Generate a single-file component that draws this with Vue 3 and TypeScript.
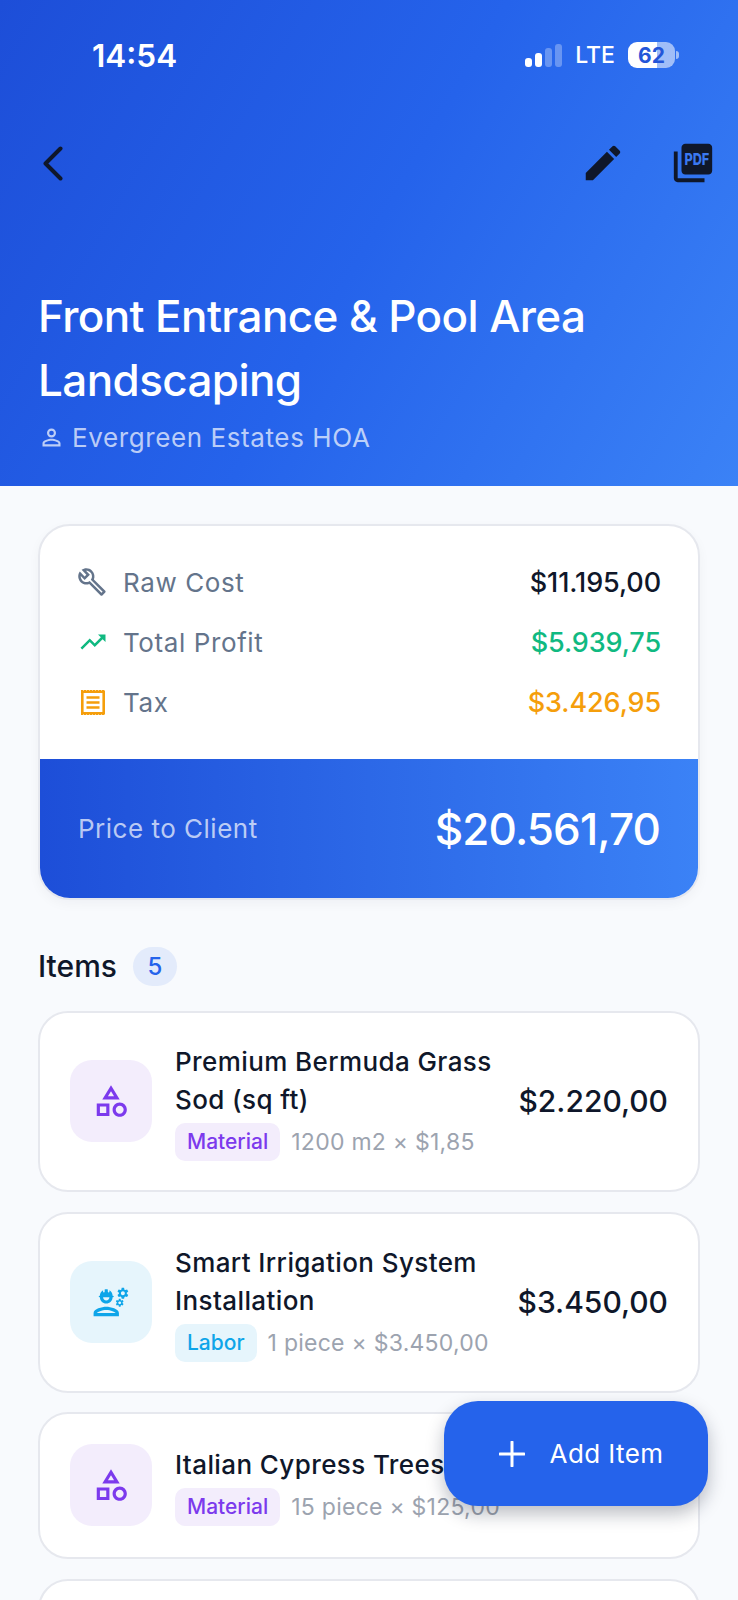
<script setup lang="ts">
// Quote detail screen: header, cost summary, item list and the add button.
interface Cost {
  label: string
  value: string
  tone: string
  icon: string
}

interface Item {
  name: string
  kind: 'Material' | 'Labor'
  meta: string
  total: string
}

const costs: Cost[] = [
  { label: 'Raw Cost', value: '$11.195,00', tone: 'raw', icon: 'build' },
  { label: 'Total Profit', value: '$5.939,75', tone: 'profit', icon: 'trend' },
  { label: 'Tax', value: '$3.426,95', tone: 'tax', icon: 'receipt' },
]

const items: Item[] = [
  { name: 'Premium Bermuda Grass Sod (sq ft)', kind: 'Material', meta: '1200 m2 × $1,85', total: '$2.220,00' },
  { name: 'Smart Irrigation System Installation', kind: 'Labor', meta: '1 piece × $3.450,00', total: '$3.450,00' },
  { name: 'Italian Cypress Trees', kind: 'Material', meta: '15 piece × $125,00', total: '$1.875,00' },
]
</script>

<template>
  <div class="screen">
    <header class="hero">
      <div class="status">
        <span class="clock">14:54</span>
        <div class="status-right">
          <span class="signal">
            <i class="bar b1"></i><i class="bar b2"></i><i class="bar b3 dim"></i><i class="bar b4 dim"></i>
          </span>
          <span class="lte">LTE</span>
          <span class="battery"><span class="battery-num">62</span></span>
          <span class="battery-tip"></span>
        </div>
      </div>

      <nav class="toolbar">
        <svg class="back" viewBox="0 0 21 35" fill="none" aria-hidden="true">
          <path d="M18.500 2.500 3.500 17.500 18.500 32.500" stroke="#0f172a" stroke-width="4" stroke-linecap="round" stroke-linejoin="round" />
        </svg>
        <div class="toolbar-right">
          <svg class="edit" viewBox="0 0 24 24" fill="#0f172a" aria-hidden="true">
            <path d="M3 17.250V21h3.750L17.810 9.940l-3.750-3.750L3 17.250zM20.710 7.040c.39-.39.39-1.020 0-1.410l-2.340-2.340c-.39-.39-1.020-.39-1.410 0l-1.830 1.830 3.750 3.750 1.830-1.830z" />
          </svg>
          <svg class="pdf" viewBox="0 0 24 24" aria-hidden="true">
            <path fill="#0f172a" d="M20 2H8c-1.100 0-2 .9-2 2v12c0 1.100.9 2 2 2h12c1.100 0 2-.9 2-2V4c0-1.100-.9-2-2-2zM4 6H2v14c0 1.100.9 2 2 2h14v-2H4V6z" />
            <text x="14" y="13" text-anchor="middle" class="pdf-text" textLength="13" lengthAdjust="spacingAndGlyphs">PDF</text>
          </svg>
        </div>
      </nav>

      <h1 class="title">Front Entrance &amp; Pool Area Landscaping</h1>
      <div class="client">
        <svg class="client-icon" viewBox="0 0 24 24" fill="currentColor" aria-hidden="true">
          <path d="M12 5.900a2.100 2.100 0 1 1 0 4.200 2.100 2.100 0 0 1 0-4.200m0 9c2.970 0 6.100 1.460 6.100 2.100v1.100H5.900V17c0-.64 3.130-2.100 6.100-2.100M12 4C9.790 4 8 5.790 8 8s1.790 4 4 4 4-1.790 4-4-1.790-4-4-4zm0 9c-2.670 0-8 1.340-8 4v3h16v-3c0-2.660-5.330-4-8-4z" />
        </svg>
        <span>Evergreen Estates HOA</span>
      </div>
    </header>

    <main class="body">
      <section class="summary">
        <div class="cost-list">
          <div v-for="c in costs" :key="c.label" class="cost">
            <span class="cost-icon" :class="c.tone">
              <svg v-if="c.icon === 'build'" class="ic-build" viewBox="0 0 24 24" fill="currentColor" aria-hidden="true">
                <path d="M22.610 18.990l-9.080-9.080c.93-2.340.45-5.100-1.440-7C9.790.61 6.210.4 3.660 2.260L7.500 6.110 6.080 7.520 2.250 3.690C.39 6.230.6 9.820 2.900 12.110c1.860 1.860 4.570 2.350 6.890 1.480l9.110 9.110c.39.39 1.020.39 1.410 0l2.300-2.300c.4-.38.4-1.010 0-1.410zm-3 1.600l-9.460-9.460c-.61.45-1.290.72-2 .82-1.360.2-2.790-.21-3.830-1.250C3.370 9.760 2.930 8.500 3 7.260l3.090 3.090 4.240-4.240-3.090-3.090c1.240-.07 2.490.37 3.440 1.310 1.080 1.080 1.490 2.570 1.240 3.960-.12.71-.42 1.370-.88 1.960l9.450 9.450-.88.88z" />
              </svg>
              <svg v-else-if="c.icon === 'trend'" class="ic-trend" viewBox="0 0 24 24" fill="currentColor" aria-hidden="true">
                <path d="M16 6l2.290 2.290-4.880 4.880-4-4L2 16.590 3.410 18l6-6 4 4 6.300-6.290L22 12V6z" />
              </svg>
              <svg v-else class="ic-receipt" viewBox="0 0 24 25" fill="none" stroke="currentColor" aria-hidden="true">
                <path stroke-width="2.600" d="M1.300 1.800h21.400v21.400H1.300z" />
                <path stroke-width="1.400" stroke-dasharray="2 1" d="M0 .7h24M0 24.300h24" />
                <path stroke-width="2.600" d="M5.500 7.500h13M5.500 12.500h13M5.500 17.500h13" />
              </svg>
            </span>
            <span class="cost-label">{{ c.label }}</span>
            <span class="cost-value" :class="c.tone">{{ c.value }}</span>
          </div>
        </div>
        <div class="price">
          <span class="price-label">Price to Client</span>
          <span class="price-value">$20.561,70</span>
        </div>
      </section>

      <div class="items-head">
        <h2 class="items-title">Items</h2>
        <span class="items-count">5</span>
      </div>

      <ul class="items">
        <li v-for="it in items" :key="it.name" class="item">
          <span class="item-icon" :class="it.kind.toLowerCase()">
            <svg v-if="it.kind === 'Material'" viewBox="0 0 24 24" fill="currentColor" aria-hidden="true">
              <path d="M12 2l-5.500 9h11L12 2zm0 3.840L13.930 9h-3.870L12 5.840zM17.500 13c-2.490 0-4.500 2.010-4.500 4.500s2.010 4.500 4.500 4.500 4.500-2.010 4.500-4.500-2.010-4.500-4.500-4.500zm0 7c-1.380 0-2.500-1.120-2.500-2.500s1.120-2.500 2.500-2.500 2.500 1.120 2.500 2.500-1.120 2.500-2.500 2.500zM3 21.500h8v-8H3v8zm2-6h4v4H5v-4z" />
            </svg>
            <svg v-else viewBox="0 0 24 24" fill="currentColor" aria-hidden="true">
              <path d="M9 15c-2.670 0-8 1.340-8 4v2h16v-2c0-2.660-5.330-4-8-4zm-6 4c.22-.72 3.310-2 6-2 2.700 0 5.800 1.290 6 2H3zM4.740 9H5c0 2.210 1.790 4 4 4s4-1.790 4-4h.26c.27 0 .49-.22.49-.49v-.02c0-.27-.22-.49-.49-.49H13c0-1.480-.81-2.750-2-3.450v.95c0 .28-.22.5-.5.5s-.5-.22-.5-.5V4.140C9.680 4.060 9.350 4 9 4s-.68.06-1 .14V5.500c0 .28-.22.5-.5.5S7 5.780 7 5.500v-.95C5.810 5.250 5 6.520 5 8h-.26c-.27 0-.49.22-.49.49v.03c0 .26.22.48.49.48zM11 9c0 1.100-.9 2-2 2s-2-.9-2-2h4z" />
              <path d="M21.980 6.230l.93-.83-.75-1.300-1.190.39c-.14-.11-.3-.2-.47-.27L20.250 3h-1.500l-.25 1.220c-.17.07-.33.16-.48.27l-1.180-.39-.75 1.300.93.83c-.02.17-.02.35 0 .52l-.93.85.75 1.300 1.200-.38c.13.1.28.18.43.25l.28 1.230h1.500l.27-1.220c.16-.07.3-.15.44-.25l1.190.38.75-1.300-.93-.85c.03-.19.02-.36.01-.53zM19.500 7.750c-.69 0-1.250-.56-1.250-1.250s.56-1.250 1.250-1.250 1.250.56 1.250 1.250-.56 1.250-1.250 1.250zM19.400 10.790l-.85.28c-.1-.08-.21-.14-.33-.19L18.040 10h-1.070l-.18.87c-.12.05-.24.12-.34.19l-.84-.28-.54.93.66.59c-.01.13-.01.25 0 .37l-.66.61.54.93.86-.27c.1.07.2.13.31.18l.18.88h1.070l.19-.87c.11-.05.22-.11.32-.18l.85.27.54-.93-.66-.61c.01-.13.01-.25 0-.37l.66-.59-.53-.93zm-1.900 2.600c-.49 0-.89-.4-.89-.89s.4-.89.89-.89.89.4.89.89-.4.89-.89.89z" />
            </svg>
          </span>
          <div class="item-main">
            <div class="item-name">{{ it.name }}</div>
            <div class="item-sub">
              <span class="pill" :class="it.kind.toLowerCase()">{{ it.kind }}</span>
              <span class="item-meta">{{ it.meta }}</span>
            </div>
          </div>
          <span class="item-total">{{ it.total }}</span>
        </li>
        <!-- next card only shows its top edge above the fold -->
        <li class="item item-peek"></li>
      </ul>
    </main>

    <button type="button" class="fab">
      <svg viewBox="0 0 26 26" fill="none" stroke="#fff" stroke-width="3" stroke-linecap="round" aria-hidden="true">
        <path d="M13 1v24M1 13h24" />
      </svg>
      <span>Add Item</span>
    </button>
  </div>
</template>

<style>
html,
body {
  margin: 0;
  background: #f8fafd;
}
</style>

<style scoped>
.screen {
  position: relative;
  width: 738px;
  height: 1600px;
  overflow: hidden;
  background: #f8fafd;
  font-family: Inter, 'Liberation Sans', sans-serif;
  color: #0f172a;
}

/* Header */
.hero {
  height: 486px;
  box-sizing: border-box;
  padding: 0 38px;
  background: linear-gradient(120deg, #1d4ed8 0%, #2563eb 50%, #3b82f6 100%);
  color: #fff;
}
.status {
  display: flex;
  align-items: center;
  justify-content: space-between;
  height: 110px;
  padding: 0 21px 0 54px;
}
.clock {
  font-size: 31.5px;
  font-weight: 600;
}
.status-right {
  display: flex;
  align-items: center;
}
.signal {
  display: flex;
  align-items: flex-end;
  gap: 3px;
  height: 23px;
  margin-right: 13px;
}
.bar {
  width: 7px;
  border-radius: 3px;
  background: #fff;
}
.bar.dim {
  background: rgba(255, 255, 255, 0.3);
}
.b1 { height: 9px; }
.b2 { height: 14px; }
.b3 { height: 19px; }
.b4 { height: 23px; }
.lte {
  font-size: 23px;
  font-weight: 500;
  margin-right: 13px;
}
.battery {
  display: flex;
  align-items: center;
  justify-content: center;
  width: 47px;
  height: 26px;
  border-radius: 9px;
  background: linear-gradient(90deg, #fff 62%, rgba(255, 255, 255, 0.55) 62%);
}
.battery-num {
  font-size: 21px;
  font-weight: 700;
  color: #2456d8;
}
.battery-tip {
  width: 3px;
  height: 8px;
  margin-left: 1px;
  border-radius: 0 3px 3px 0;
  background: rgba(255, 255, 255, 0.55);
}

.toolbar {
  display: flex;
  align-items: center;
  justify-content: space-between;
  height: 84px;
  padding-top: 11px;
  padding-left: 4px;
}
.back {
  width: 21px;
  height: 35px;
}
.toolbar-right {
  display: flex;
  align-items: center;
  gap: 44px;
  margin-right: -16px;
}
.edit {
  width: 46px;
  height: 46px;
}
.pdf {
  width: 46px;
  height: 46px;
  overflow: visible;
}
.pdf-text {
  font-family: Inter, 'Liberation Sans', sans-serif;
  font-size: 8.5px;
  font-weight: 800;
  fill: #3a78f0;
}

.title {
  margin: 79px 0 0;
  font-size: 44px;
  line-height: 64px;
  font-weight: 500;
  letter-spacing: -0.6px;
}
.client {
  display: flex;
  align-items: center;
  gap: 7px;
  margin-top: 10px;
  font-size: 26px;
  letter-spacing: 0.6px;
  color: rgba(255, 255, 255, 0.7);
}
.client-icon {
  width: 27px;
  height: 27px;
}

/* Summary card */
.body {
  padding: 38px 38px 0;
}
.summary {
  border: 2px solid #e6e8ee;
  border-radius: 32px;
  overflow: hidden;
  background: #fff;
  box-shadow: 0 4px 12px rgba(15, 23, 42, 0.04);
}
.cost-list {
  display: flex;
  flex-direction: column;
  gap: 18px;
  padding: 35px 37px 36px 38px;
}
.cost {
  display: flex;
  align-items: center;
  height: 42px;
}
.cost-icon {
  display: flex;
  align-items: center;
  justify-content: center;
  width: 30px;
  height: 30px;
  margin-right: 15px;
}
.cost-icon svg {
  display: block;
}
.ic-build {
  width: 30px;
  height: 30px;
  margin-left: -2px;
}
.ic-trend {
  width: 30px;
  height: 30px;
}
.ic-receipt {
  width: 24px;
  height: 25px;
}
.cost-label {
  flex: 1;
  font-size: 26px;
  letter-spacing: 0.6px;
  color: #64748b;
}
.cost-value {
  font-size: 27px;
  font-weight: 500;
  letter-spacing: -0.1px;
}
.cost-icon.raw { color: #64748b; }
.cost-icon.profit, .cost-value.profit { color: #10b981; }
.cost-icon.tax, .cost-value.tax { color: #f59e0b; }
.cost-value.raw { color: #0f172a; }

.price {
  display: flex;
  align-items: center;
  justify-content: space-between;
  height: 139px;
  padding: 0 38px;
  background: linear-gradient(90deg, #1d4ed8 0%, #3b82f6 100%);
  color: #fff;
}
.price-label {
  font-size: 26px;
  letter-spacing: 0.5px;
  color: rgba(255, 255, 255, 0.7);
}
.price-value {
  font-size: 44px;
  font-weight: 500;
  letter-spacing: -0.9px;
}

/* Item list */
.items-head {
  display: flex;
  align-items: center;
  gap: 16px;
  margin-top: 46px;
  height: 40px;
}
.items-title {
  margin: 0;
  font-size: 30px;
  font-weight: 500;
}
.items-count {
  display: flex;
  align-items: center;
  justify-content: center;
  width: 44px;
  height: 39px;
  border-radius: 20px;
  background: #e3ebfb;
  font-size: 24px;
  font-weight: 500;
  color: #2563eb;
}
.items {
  display: flex;
  flex-direction: column;
  gap: 19.5px;
  margin: 25px 0 0;
  padding: 0;
  list-style: none;
}
.item {
  display: flex;
  align-items: center;
  box-sizing: border-box;
  padding: 30px 30px 29px;
  border: 2px solid #e6e8ee;
  border-radius: 30px;
  background: #fff;
}
.item-peek {
  height: 120px;
}
.item-icon {
  display: flex;
  flex: none;
  align-items: center;
  justify-content: center;
  width: 82px;
  height: 82px;
  margin: 0 23px 2px 0;
  border-radius: 22px;
}
.item-icon svg {
  width: 38px;
  height: 38px;
}
.item-icon.material,
.pill.material {
  background: #f3edfc;
  color: #7c3aed;
}
.item-icon.labor,
.pill.labor {
  background: #e6f5fc;
  color: #0ea5e9;
}
.item-main {
  flex: 1;
  min-width: 0;
}
.item-name {
  font-size: 26px;
  line-height: 38px;
  font-weight: 500;
  letter-spacing: 0.4px;
}
.item-sub {
  display: flex;
  align-items: center;
  gap: 11px;
  margin-top: 4px;
}
.pill {
  padding: 4px 12px;
  border-radius: 10px;
  font-size: 21px;
  line-height: 30px;
  font-weight: 500;
}
.item-meta {
  font-size: 23px;
  letter-spacing: 0.25px;
  white-space: nowrap;
  color: #9ca3af;
}
.item-total {
  flex: none;
  margin: 0 0 2px 20px;
  font-size: 30px;
  font-weight: 500;
}

/* Add button */
.fab {
  position: absolute;
  left: 444px;
  top: 1401px;
  display: flex;
  align-items: center;
  justify-content: center;
  gap: 25px;
  width: 264px;
  height: 105px;
  padding: 0 0 0 10px;
  border: 0;
  border-radius: 34px;
  background: #2563eb;
  box-shadow: 0 8px 18px rgba(15, 23, 42, 0.28);
  font-family: inherit;
  font-size: 26px;
  letter-spacing: 0.4px;
  color: #fff;
}
.fab svg {
  width: 26px;
  height: 26px;
}
</style>
